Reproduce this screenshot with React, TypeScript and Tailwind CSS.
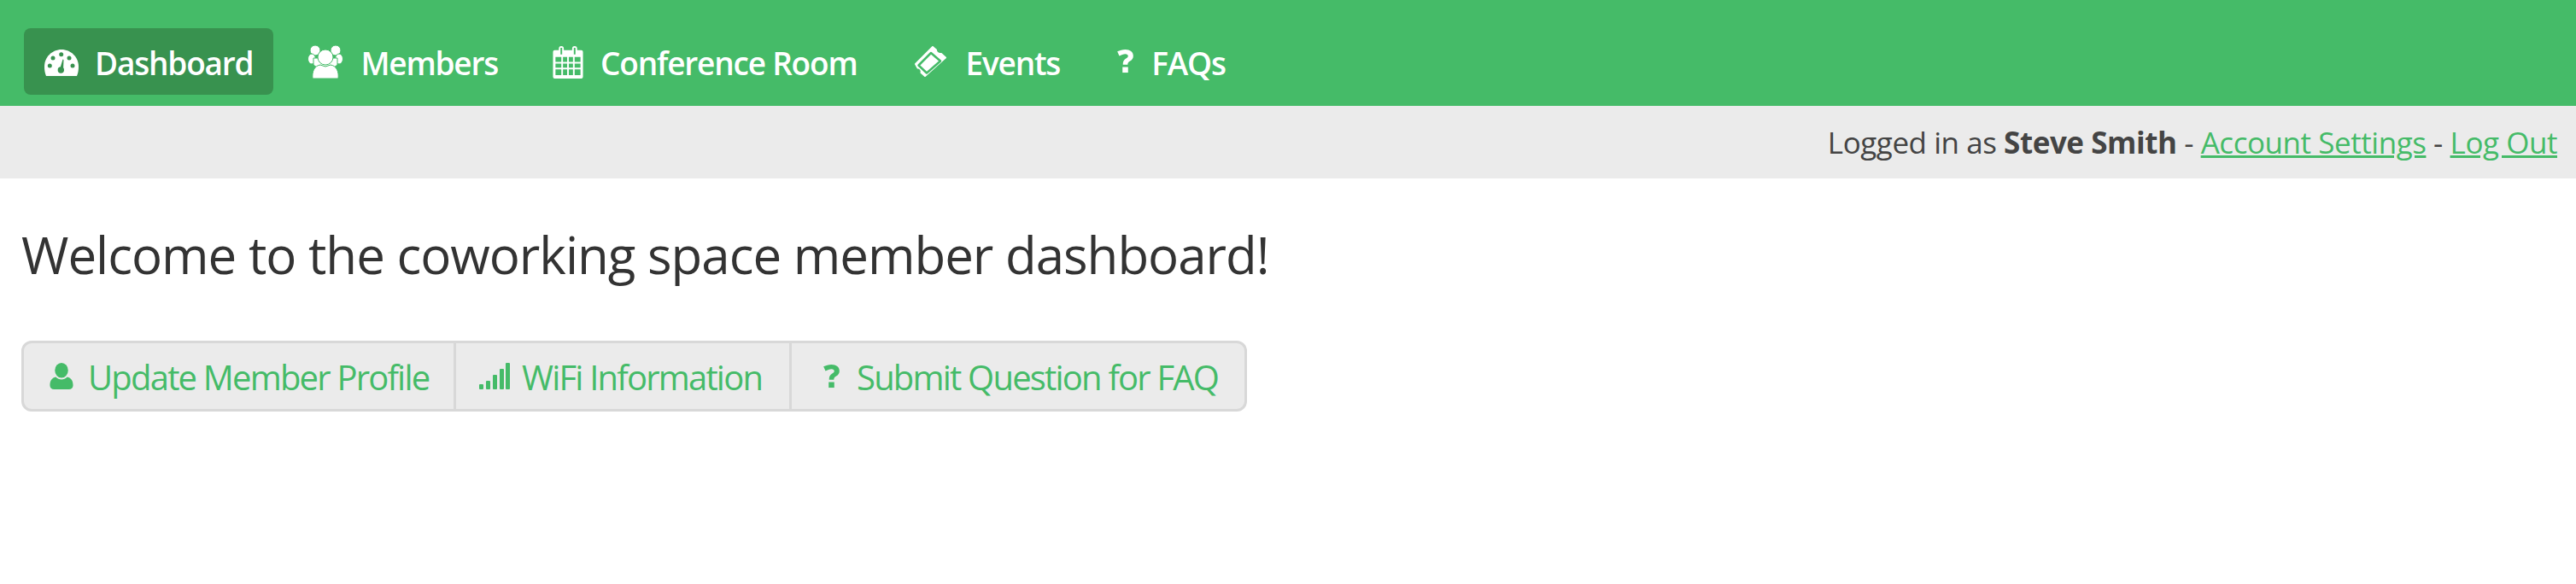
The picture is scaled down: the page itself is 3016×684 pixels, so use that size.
import type { ReactNode } from 'react';

function GaugeIcon() {
    return (
        <svg viewBox="0 0 40 31" className="w-[40px] h-[31px] mt-[2px]">
            <path fill="#fff" d="M20 0C9 0 0 9 0 20c0 4 .7 8 2 11h36c1.300-3 2-7 2-11C40 9 31 0 20 0Z" />
            <g fill="#38924f">
                <circle cx="19.700" cy="5.700" r="2.500" />
                <circle cx="10" cy="10" r="2.500" />
                <circle cx="29" cy="10" r="2.500" />
                <circle cx="6.300" cy="19" r="2.500" />
                <circle cx="33" cy="19" r="2.500" />
                <circle cx="19.300" cy="24" r="3.700" />
                <path d="M18 23 21.500 11.500 22.500 12 22 25Z" />
            </g>
        </svg>
    );
}

function GroupIcon() {
    return (
        <svg viewBox="0 0 42 40" className="w-[42px] h-[40px]" fill="#fff" stroke="#45bb68" strokeWidth="1">
            <circle cx="9" cy="7" r="6" />
            <circle cx="33" cy="7" r="6" />
            <ellipse cx="5" cy="17" rx="4.500" ry="6" />
            <ellipse cx="37" cy="17" rx="4.500" ry="6" />
            <path d="M7 16h28v8l-4 3H11l-4-3Z" />
            <circle cx="21" cy="15" r="9" />
            <path d="M6 40c-1-8 2-15 9-16l6 2 6-2c7 1 10 8 9 16Z" />
        </svg>
    );
}

function CalendarIcon() {
    return (
        <svg viewBox="0 0 36 40" className="w-[36px] h-[39px]">
            <path fill="#fff" d="M2 6h5V4a3 3 0 0 1 6 0v2h10V4a3 3 0 0 1 6 0v2h5a2 2 0 0 1 2 2v30a2 2 0 0 1-2 2H2a2 2 0 0 1-2-2V8a2 2 0 0 1 2-2Z" />
            <path fill="#45bb68" d="M9 3h2v8H9zM25 3h2v8h-2z" />
            <path
                fill="#45bb68"
                d="M3 14h7v6H3zM12 14h5v6h-5zM19 14h5v6h-5zM26 14h7v6h-7zM3 22h7v5H3zM12 22h5v5h-5zM19 22h5v5h-5zM26 22h7v5h-7zM3 29h7v7H3zM12 29h5v7h-5zM19 29h5v7h-5zM26 29h7v7h-7z"
            />
        </svg>
    );
}

function TicketIcon() {
    return (
        <svg viewBox="0 0 37 36" className="w-[37px] h-[36px]">
            <path
                fill="#fff"
                stroke="#fff"
                strokeWidth="2"
                strokeLinejoin="round"
                d="M21 1 25 4.500C25 7 27 9.500 31 9L36 13.500 12 35 7.500 31C8.500 28 6 25.500 3.500 25.500L1 21Z"
            />
            <path fill="none" stroke="#45bb68" strokeWidth="2.500" strokeLinejoin="round" d="M19 8 30 17.500 14 31.500 4.500 22.500Z" />
        </svg>
    );
}

function QuestionIcon({ color }: { color: string }) {
    return (
        <svg viewBox="0 0 20 30" className="w-[19px] h-[28px]" fill={color}>
            <path d="M10 0c6 0 10 3 10 8 0 3-1.500 5-4 6.500-2 1.300-3 2-3 4.500H7c0-4 1-6 3.500-7.500C12.500 10.300 13.500 9.500 13.500 8c0-1.500-1.300-2.500-3.500-2.500-2.300 0-5 1-7.500 2.500L0 2.500C3 1 6.500 0 10 0Z" />
            <path d="M6.500 22h7v7h-7z" />
        </svg>
    );
}

function PersonIcon() {
    return (
        <svg viewBox="0 0 28 32" className="w-[28px] h-[31px]" fill="#45bb68">
            <ellipse cx="14" cy="9" rx="8" ry="9" />
            <path d="M0 27c0-6 3-9 7-10 2 2 4.500 3 7 3s5-1 7-3c4 1 7 4 7 10 0 3-2 5-5 5H5c-3 0-5-2-5-5Z" />
        </svg>
    );
}

function SignalIcon() {
    return (
        <svg viewBox="0 0 36 31" className="w-[36px] h-[31px]" fill="#45bb68">
            <rect x="0" y="25" width="5" height="6" rx="1" />
            <rect x="8" y="21" width="5" height="10" rx="1" />
            <rect x="16" y="14" width="5" height="17" rx="1" />
            <rect x="24" y="7" width="5" height="24" rx="1" />
            <rect x="31" y="0" width="5" height="31" rx="1" />
        </svg>
    );
}

function NavEntry({ icon, label, active, boxClass }: { icon: ReactNode; label: string; active?: boolean; boxClass: string }) {
    return (
        <a className={`flex items-center h-[78px] px-6 rounded-lg text-white text-[37px] font-semibold tracking-[-1.2px] ${active ? 'bg-[#38924f]' : ''}`}>
            <span className={`flex items-center shrink-0 ${boxClass}`}>{icon}</span>
            <span className="pt-[3px]">{label}</span>
        </a>
    );
}

function GroupButton({ icon, label, boxClass, widthClass, border }: { icon: ReactNode; label: string; boxClass: string; widthClass: string; border?: boolean }) {
    return (
        <a className={`flex items-center h-full ${widthClass} ${border ? 'border-r-[3px] border-[#d8d8d8]' : ''}`}>
            <span className={`flex items-center shrink-0 ${boxClass}`}>{icon}</span>
            <span className="pt-[2px]">{label}</span>
        </a>
    );
}

export default function App() {
    return (
        <div className="min-h-screen bg-white font-['Open_Sans',sans-serif]">
            <nav className="flex gap-4 h-[124px] pt-[33px] pl-[28px] bg-[#45bb68]">
                <NavEntry active icon={<GaugeIcon />} label="Dashboard" boxClass="w-[59px]" />
                <NavEntry icon={<GroupIcon />} label="Members" boxClass="w-[62px]" />
                <NavEntry icon={<CalendarIcon />} label="Conference Room" boxClass="w-[56px]" />
                <NavEntry icon={<TicketIcon />} label="Events" boxClass="w-[63px] pl-[3px]" />
                <NavEntry icon={<QuestionIcon color="#fff" />} label="FAQs" boxClass="w-[43px] pl-[3px]" />
            </nav>
            <div className="flex justify-end items-center h-[85px] pr-[22px] bg-[#ebebeb] text-[#444] text-[35px] tracking-[-0.45px]">
                <span className="pt-[1px]">
                    Logged in as <strong className="font-bold">Steve Smith</strong> -{' '}
                    <a className="text-[#45bb68] underline">Account Settings</a> -{' '}
                    <a className="text-[#45bb68] underline">Log Out</a>
                </span>
            </div>
            <main className="px-[25px]">
                <h1 className="mt-[45px] mb-[57px] text-[60px] leading-[88px] text-[#333] tracking-[-1px]">
                    Welcome to the coworking space member dashboard!
                </h1>
                <div className="flex w-[1435px] h-[83px] border-[3px] border-[#d8d8d8] rounded-xl bg-[#ebebeb] text-[#45bb68] text-[40px] tracking-[-1.8px]">
                    <GroupButton border icon={<PersonIcon />} label="Update Member Profile" boxClass="w-[75px] pl-[30px]" widthClass="w-[506px]" />
                    <GroupButton border icon={<SignalIcon />} label="WiFi Information" boxClass="w-[77px] pl-[27px]" widthClass="w-[393px]" />
                    <GroupButton icon={<QuestionIcon color="#45bb68" />} label="Submit Question for FAQ" boxClass="w-[76px] pl-[37px]" widthClass="flex-1" />
                </div>
            </main>
        </div>
    );
}
